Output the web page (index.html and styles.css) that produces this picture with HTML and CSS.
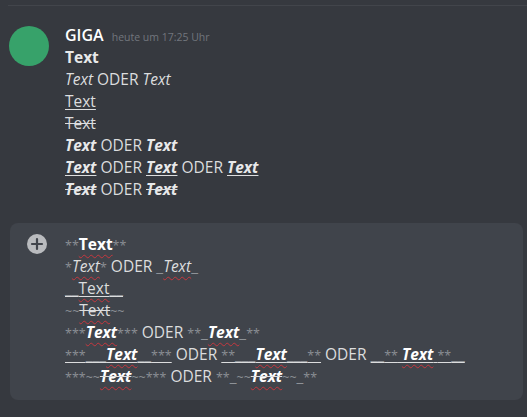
FILE: index.html
```html
<!DOCTYPE html>
<html lang="de">
<head>
<meta charset="utf-8">
<title>GIGA</title>
<link rel="stylesheet" href="styles.css">
</head>
<body>
<div class="divider"></div>
<div class="message">
  <div class="avatar"></div>
  <div class="content">
    <div class="header"><span class="name">GIGA</span><span class="time">heute um 17:25 Uhr</span></div>
    <div class="line"><b>Text</b></div>
    <div class="line"><i>Text</i> ODER <i>Text</i></div>
    <div class="line"><span class="ul">Text</span></div>
    <div class="line"><span class="st">Text</span></div>
    <div class="line"><b><i>Text</i></b> ODER <b><i>Text</i></b></div>
    <div class="line"><span class="ul"><b><i>Text</i></b></span> ODER <span class="ul"><b><i>Text</i></b></span> ODER <span class="ul"><b><i>Text</i></b></span></div>
    <div class="line"><span class="st"><b><i>Text</i></b></span> ODER <span class="st"><b><i>Text</i></b></span></div>
  </div>
</div>
<div class="composer">
  <div class="plus">
    <svg width="20" height="20" viewBox="0 0 20 20"><circle cx="10" cy="10" r="10" fill="#b9bbbe"/><path d="M10 5v10M5 10h10" stroke="#40444b" stroke-width="2.2" stroke-linecap="round"/></svg>
  </div>
  <div class="editor">
    <div class="line"><span class="m">**</span><b class="sp">Text</b><span class="m">**</span></div>
    <div class="line"><span class="m">*</span><i class="sp">Text</i><span class="m">*</span> ODER <span class="u">_</span><i class="sp">Text</i><span class="u">_</span></div>
    <div class="line"><span class="ul"><span class="u">__</span><span class="sp">Text</span><span class="u">__</span></span></div>
    <div class="line"><span class="m">~~</span><span class="st"><span class="sp">Text</span></span><span class="m">~~</span></div>
    <div class="line"><span class="m">***</span><b><i class="sp">Text</i></b><span class="m">***</span> ODER <span class="m">**</span><span class="u">_</span><b><i class="sp">Text</i></b><span class="u">_</span><span class="m">**</span></div>
    <div class="line"><span class="ul"><span class="m">***</span><span class="u">___</span><b><i class="sp">Text</i></b><span class="u">__</span><span class="m">***</span></span> ODER <span class="ul"><span class="m">**</span><span class="u">___</span><b><i class="sp">Text</i></b><span class="u">___</span><span class="m">**</span></span> ODER <span class="ul"><span class="u">__</span><span class="m">**</span> <b><i class="sp">Text</i></b> <span class="m">**</span><span class="u">__</span></span></div>
    <div class="line"><span class="m">***~~</span><span class="st"><b><i class="sp">Text</i></b></span><span class="m">~~***</span> ODER <span class="m">**</span><span class="u">_</span><span class="m">~~</span><span class="st"><b><i class="sp">Text</i></b></span><span class="m">~~</span><span class="u">_</span><span class="m">**</span></div>
  </div>
</div>
</body>
</html>
```

FILE: styles.css
```css
html, body {
  margin: 0;
  padding: 0;
  background: #36393f;
  height: 100%;
}
body {
  font-family: "Open Sans", "Noto Sans", sans-serif;
  font-size: 15.5px;
  color: #dcddde;
  overflow: hidden;
}
.divider {
  margin: 5px 0 0 8px;
  height: 1px;
  background: #42454b;
}
.message {
  display: flex;
  margin-top: 18px;
}
.avatar {
  width: 40px;
  height: 40px;
  border-radius: 50%;
  background: #37a26a;
  margin: 2px 16px 0 9px;
  flex: none;
}
.content {
  line-height: 22px;
}
.header {
  display: flex;
  align-items: baseline;
  gap: 8px;
  height: 22px;
  line-height: 22px;
}
.name {
  color: #ffffff;
  font-weight: 600;
  font-size: 16px;
}
.time {
  color: #72767d;
  font-size: 10.5px;
}
.line {
  height: 22px;
  line-height: 22px;
  white-space: pre;
}
b {
  font-weight: 700;
  color: #ffffff;
}
.content b {
  color: #e8e9ea;
}
.ul {
  text-decoration: underline;
  text-decoration-color: #dcddde;
  text-underline-offset: 2px;
}
.st {
  text-decoration: line-through;
  text-decoration-color: #dcddde;
}
.composer {
  display: flex;
  margin: 23px 4px 0 10px;
  background: #40444b;
  border-radius: 8px;
  padding: 10px 0 13px 17px;
}
.plus {
  width: 20px;
  height: 20px;
  margin: 1px 18px 0 0;
  flex: none;
}
.plus svg {
  display: block;
}
.editor {
  line-height: 22px;
}
.m {
  color: #8a8e94;
  font-weight: 400;
  font-style: normal;
  font-size: 12.5px;
}
.u {
  color: #8e9297;
  font-weight: 400;
  font-style: normal;
}
.sp {
  text-decoration: underline wavy #c6373e;
  text-decoration-thickness: 1px;
  text-underline-offset: 4px;
}
```
